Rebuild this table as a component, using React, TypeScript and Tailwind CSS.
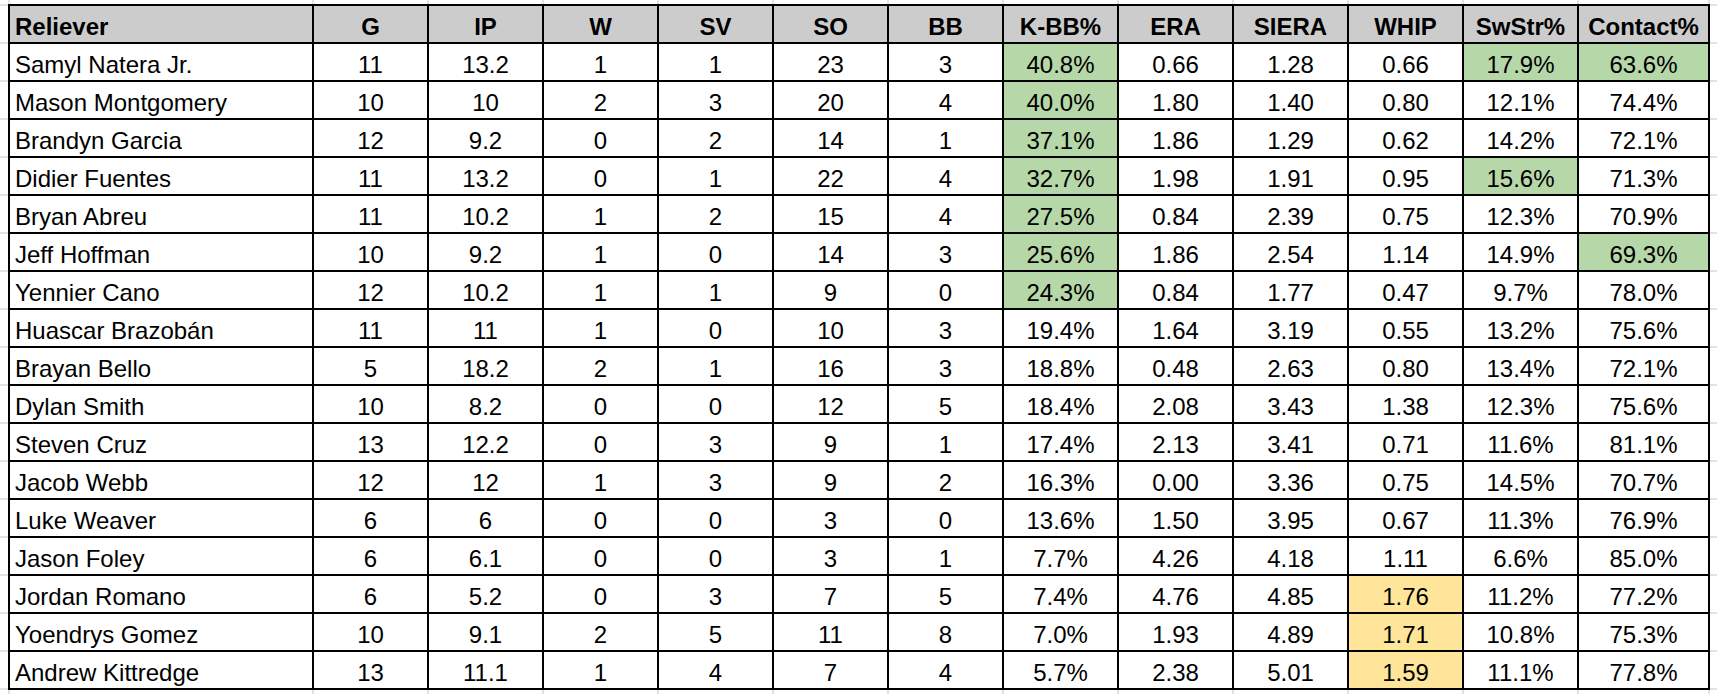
import React from "react";

type Row = { name: string; v: string[]; hl?: Record<number, "g" | "y"> };

const headers = ["G", "IP", "W", "SV", "SO", "BB", "K-BB%", "ERA", "SIERA", "WHIP", "SwStr%", "Contact%"];

const rows: Row[] = [
  { name: "Samyl Natera Jr.", v: ["11", "13.2", "1", "1", "23", "3", "40.8%", "0.66", "1.28", "0.66", "17.9%", "63.6%"], hl: { 6: "g", 10: "g", 11: "g" } },
  { name: "Mason Montgomery", v: ["10", "10", "2", "3", "20", "4", "40.0%", "1.80", "1.40", "0.80", "12.1%", "74.4%"], hl: { 6: "g" } },
  { name: "Brandyn Garcia", v: ["12", "9.2", "0", "2", "14", "1", "37.1%", "1.86", "1.29", "0.62", "14.2%", "72.1%"], hl: { 6: "g" } },
  { name: "Didier Fuentes", v: ["11", "13.2", "0", "1", "22", "4", "32.7%", "1.98", "1.91", "0.95", "15.6%", "71.3%"], hl: { 6: "g", 10: "g" } },
  { name: "Bryan Abreu", v: ["11", "10.2", "1", "2", "15", "4", "27.5%", "0.84", "2.39", "0.75", "12.3%", "70.9%"], hl: { 6: "g" } },
  { name: "Jeff Hoffman", v: ["10", "9.2", "1", "0", "14", "3", "25.6%", "1.86", "2.54", "1.14", "14.9%", "69.3%"], hl: { 6: "g", 11: "g" } },
  { name: "Yennier Cano", v: ["12", "10.2", "1", "1", "9", "0", "24.3%", "0.84", "1.77", "0.47", "9.7%", "78.0%"], hl: { 6: "g" } },
  { name: "Huascar Brazobán", v: ["11", "11", "1", "0", "10", "3", "19.4%", "1.64", "3.19", "0.55", "13.2%", "75.6%"] },
  { name: "Brayan Bello", v: ["5", "18.2", "2", "1", "16", "3", "18.8%", "0.48", "2.63", "0.80", "13.4%", "72.1%"] },
  { name: "Dylan Smith", v: ["10", "8.2", "0", "0", "12", "5", "18.4%", "2.08", "3.43", "1.38", "12.3%", "75.6%"] },
  { name: "Steven Cruz", v: ["13", "12.2", "0", "3", "9", "1", "17.4%", "2.13", "3.41", "0.71", "11.6%", "81.1%"] },
  { name: "Jacob Webb", v: ["12", "12", "1", "3", "9", "2", "16.3%", "0.00", "3.36", "0.75", "14.5%", "70.7%"] },
  { name: "Luke Weaver", v: ["6", "6", "0", "0", "3", "0", "13.6%", "1.50", "3.95", "0.67", "11.3%", "76.9%"] },
  { name: "Jason Foley", v: ["6", "6.1", "0", "0", "3", "1", "7.7%", "4.26", "4.18", "1.11", "6.6%", "85.0%"] },
  { name: "Jordan Romano", v: ["6", "5.2", "0", "3", "7", "5", "7.4%", "4.76", "4.85", "1.76", "11.2%", "77.2%"], hl: { 9: "y" } },
  { name: "Yoendrys Gomez", v: ["10", "9.1", "2", "5", "11", "8", "7.0%", "1.93", "4.89", "1.71", "10.8%", "75.3%"], hl: { 9: "y" } },
  { name: "Andrew Kittredge", v: ["13", "11.1", "1", "4", "7", "4", "5.7%", "2.38", "5.01", "1.59", "11.1%", "77.8%"], hl: { 9: "y" } },
];

const colW = (i: number) => (i === 11 ? "w-[131px]" : "w-[115px]");

function VStrip({ className }: { className: string }) {
  return (
    <div className={`flex ${className}`}>
      <div className="w-[10px] shrink-0 border-r-2 border-[#e2e2e2]" />
      <div className="w-[304px] shrink-0 border-r-2 border-[#e2e2e2]" />
      {headers.map((h, i) => (
        <div key={h} className={`${colW(i)} shrink-0 border-r-2 border-[#e2e2e2]`} />
      ))}
      <div className="flex-1" />
    </div>
  );
}

function HStrip({ className }: { className: string }) {
  return (
    <div className={`flex flex-col ${className}`}>
      <div className="h-[2px] bg-[#e2e2e2]" />
      {Array.from({ length: 18 }).map((_, i) => (
        <div key={i} className="h-[38px] border-b-2 border-[#e2e2e2]" />
      ))}
    </div>
  );
}

export default function App() {
  return (
    <div
      className="w-[1717px] h-[694px] overflow-hidden bg-white text-black flex flex-col"
      style={{ fontFamily: '"Liberation Sans", Arial, sans-serif' }}
    >
      <VStrip className="h-[4px] shrink-0" />
      <div className="flex shrink-0">
        <HStrip className="w-[8px] shrink-0" />
        <div className="border-l-2 border-t-2 border-black flex flex-col shrink-0">
          <div className="flex h-[38px] bg-[#cccccc] font-bold text-[24px]">
            <div className="w-[304px] border-r-2 border-b-2 border-black flex items-end pb-[3px] pl-[5px] leading-none">
              Reliever
            </div>
            {headers.map((h, i) => (
              <div
                key={h}
                className={`${colW(i)} border-r-2 border-b-2 border-black flex items-end justify-center pb-[3px] leading-none`}
              >
                {h}
              </div>
            ))}
          </div>
          {rows.map((r) => (
            <div key={r.name} className="flex h-[38px] text-[24px]">
              <div className="w-[304px] border-r-2 border-b-2 border-black flex items-end pb-[3px] pl-[5px] leading-none">
                {r.name}
              </div>
              {r.v.map((val, i) => {
                const h = r.hl?.[i];
                const bg = h === "g" ? "bg-[#b6d7a8]" : h === "y" ? "bg-[#ffe599]" : "bg-white";
                return (
                  <div
                    key={i}
                    className={`${colW(i)} ${bg} border-r-2 border-b-2 border-black flex items-end justify-center pb-[3px] leading-none`}
                  >
                    {val}
                  </div>
                );
              })}
            </div>
          ))}
        </div>
        <HStrip className="flex-1" />
      </div>
      <VStrip className="flex-1" />
    </div>
  );
}
